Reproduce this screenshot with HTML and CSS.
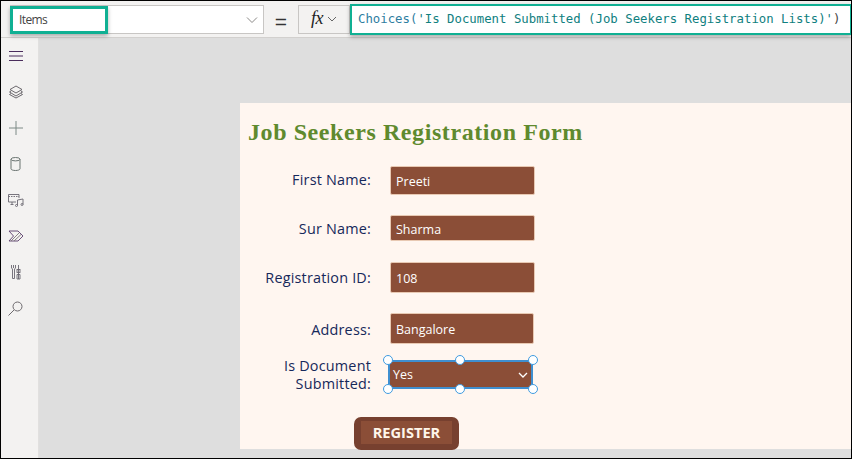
FILE: index.html
```html
<!DOCTYPE html>
<html lang="en">
<head>
<meta charset="utf-8">
<title>Job Seekers Registration Form</title>
<link rel="stylesheet" href="styles.css">
</head>
<body>
<div class="app">
  <header class="formula-bar">
    <div class="property">
      <span class="property-name">Items</span>
      <svg class="chev" width="12" height="8" viewBox="0 0 12 8"><path d="M1 1.500l5 5 5-5" fill="none" stroke="#8a8886"/></svg>
      <div class="highlight-short"></div>
    </div>
    <div class="equals">=</div>
    <div class="fx">
      <span class="fx-label">fx</span>
      <svg width="10" height="6" viewBox="0 0 10 6"><path d="M1 1l4 4 4-4" fill="none" stroke="#666"/></svg>
    </div>
    <div class="formula"><span class="fn">Choices(</span><span class="str">'Is Document Submitted (Job Seekers Registration Lists)'</span><span class="fn-end">)</span></div>
  </header>
  <div class="workspace">
    <nav class="rail">
      <div class="rail-item"><svg width="16" height="12" viewBox="0 0 16 12"><path d="M1 1.500h14M1 6h14M1 10.500h14" fill="none" stroke="#4a2d5c"/></svg></div>
      <div class="rail-item"><svg width="16" height="14" viewBox="0 0 16 14" fill="none" stroke="#5d5a60" stroke-width=".9"><path d="M8 1l6 3.500L8 8 2 4.500z"/><path d="M3 6L1.500 7 8 11l6.500-4L13 6"/><path d="M3 8.500L1.500 9.500 8 13l6.500-3.500L13 8.500"/></svg></div>
      <div class="rail-item"><svg width="16" height="16" viewBox="0 0 16 16"><path d="M8 1v14M1 8h14" fill="none" stroke="#7d8a86"/></svg></div>
      <div class="rail-item"><svg width="11" height="14" viewBox="0 0 11 14" fill="none" stroke="#6a7471"><ellipse cx="5.500" cy="2.200" rx="4.500" ry="1.700"/><path d="M1 2.200v9.600c0 1 2 1.700 4.500 1.700s4.500-.7 4.500-1.700V2.200"/></svg></div>
      <div class="rail-item"><svg width="16" height="13" viewBox="0 0 16 13" fill="none" stroke="#6a6670" stroke-width=".9"><path d="M8 8H.5V.5H11V4"/><path d="M.5 2.500H11" stroke-dasharray="1.500 1"/><path d="M4 8v2M2.500 10.500h3"/><path d="M9.500 11.500V6l5.500-1v5.500"/><circle cx="8.500" cy="11.500" r="1"/><circle cx="14" cy="10.500" r="1"/></svg></div>
      <div class="rail-item"><svg width="16" height="12" viewBox="0 0 16 12" fill="none" stroke="#5a3d6c" stroke-width=".9"><path d="M1 1h9l5 5-5 5H1l4.500-5z"/><path d="M3 11l8-8M6 11l7-6.500" stroke="#7a7478"/></svg></div>
      <div class="rail-item"><svg width="10" height="16" viewBox="0 0 10 16" fill="none" stroke="#6a6670" stroke-width=".9"><path d="M.5 1v3l1 1v9.500h2V5l1-1V1"/><path d="M2.500 1v3"/><path d="M7.500 1v14"/><rect x="6" y="5.500" width="3" height="3"/><path d="M6 10.500h3v4.500H6z"/></svg></div>
      <div class="rail-item"><svg width="15" height="15" viewBox="0 0 15 15" fill="none" stroke="#6d6a6e"><circle cx="9.500" cy="5.500" r="4.500"/><path d="M6 9l-5.500 5.500"/></svg></div>
    </nav>
    <main class="canvas">
      <section class="screen">
        <h1 class="title">Job Seekers Registration Form</h1>
        <div class="row row-first"><label class="label">First Name:</label><div class="input">Preeti</div></div>
        <div class="row row-sur"><label class="label">Sur Name:</label><div class="input">Sharma</div></div>
        <div class="row row-reg"><label class="label">Registration ID:</label><div class="input">108</div></div>
        <div class="row row-addr"><label class="label">Address:</label><div class="input input-narrow">Bangalore</div></div>
        <div class="row row-doc">
          <label class="label">Is Document<br>Submitted:</label>
          <div class="select">
            <span>Yes</span>
            <svg width="10" height="6" viewBox="0 0 10 6"><path d="M1 1l4 4 4-4" fill="none" stroke="#fff" stroke-width="1.300"/></svg>
            <i class="handle h-tl"></i><i class="handle h-tc"></i><i class="handle h-tr"></i>
            <i class="handle h-bl"></i><i class="handle h-bc"></i><i class="handle h-br"></i>
          </div>
        </div>
        <div class="button-row"><button class="register"><span class="register-inner">REGISTER</span></button></div>
      </section>
    </main>
  </div>
</div>
</body>
</html>
```
FILE: styles.css
```css
* { box-sizing: border-box; }
html, body { margin: 0; padding: 0; }
body { width: 852px; height: 459px; overflow: hidden; background: #000; font-family: "Open Sans", sans-serif; }

.app {
  width: 852px;
  height: 459px;
  border: 1px solid #000;
  display: flex;
  flex-direction: column;
  background: #dedede;
}

.formula-bar {
  height: 37px;
  flex: none;
  background: #f3f2f1;
  border-bottom: 1px solid #d2d0ce;
  display: flex;
  align-items: flex-start;
  padding-top: 4px;
  padding-left: 9px;
  position: relative;
  z-index: 2;
}
.property {
  position: relative;
  width: 254px;
  height: 29px;
  background: #fff;
  border: 1px solid #c8c6c4;
  display: flex;
  align-items: center;
  justify-content: space-between;
  padding: 0 5px 0 8px;
}
.property-name { font: 12px "Open Sans", sans-serif; letter-spacing: -0.6px; color: #444; }
.highlight-short {
  position: absolute;
  left: -1px;
  top: 0;
  width: 98px;
  height: 28px;
  border: 3px solid #10b093;
  box-shadow: 0 2px 4px rgba(0,0,0,.3);
}
.equals { width: 34px; text-align: center; font: 21px "Liberation Sans", sans-serif; color: #333; line-height: 33px; }
.fx {
  width: 52px;
  height: 29px;
  border: 1px solid #c8c6c4;
  display: flex;
  align-items: center;
  gap: 4px;
  padding: 0 0 2px 12px;
}
.fx-label { font: italic 18px "Liberation Serif", serif; color: #222; letter-spacing: -0.5px; }
.formula {
  flex: 1;
  height: 31px;
  margin-top: -1px;
  background: #fff;
  border: 2px solid #10b093;
  border-right-width: 1px;
  box-shadow: 0 2px 4px rgba(0,0,0,.3);
  padding: 4px 0 0 6px;
  font: 12.33px/18px "DejaVu Sans Mono", monospace;
  white-space: nowrap;
}
.fn { color: #2e7d9f; }
.str { color: #0f8080; }
.fn-end { color: #444; }

.workspace { flex: 1; display: flex; min-height: 0; }
.rail {
  width: 38px;
  flex: none;
  background: #f3f2f1;
  border-right: 1px solid #e1e0df;
  display: flex;
  flex-direction: column;
}
.rail-item { height: 36px; display: flex; align-items: center; justify-content: center; padding-right: 8px; }

.canvas { flex: 1; min-width: 0; padding: 65px 0 8px 201px; overflow: hidden; }
.screen { height: 346px; background: #fff6f0; padding: 0 0 0 8px; position: relative; }
.title {
  margin: 0;
  height: 56px;
  padding-top: 15px;
  font: bold 24px/29px "Liberation Serif", serif;
  letter-spacing: 0.58px;
  color: #5f8a2e;
}
.row { display: flex; align-items: center; }
.label {
  width: 123px;
  text-align: right;
  font: 500 14.4px/18px "Open Sans", sans-serif;
  color: #16285a;
  letter-spacing: 0.2px;
}
.input {
  width: 145px;
  margin-left: 19px;
  padding-top: 2px;
  background: #8b4e37;
  border: 1px solid #e8c9b3;
  border-radius: 2px;
  color: #fff;
  font: 12.5px "Open Sans", sans-serif;
  padding-left: 5px;
  display: flex;
  align-items: center;
}
.input-narrow { width: 144px; }
.row-first { height: 29px; margin-top: 7px; }
.row-first .label { margin-top: -1px; }
.row-first .input { height: 29px; }
.row-sur { height: 26px; margin-top: 20px; }
.row-sur .label { margin-top: 2px; }
.row-sur .input { height: 26px; }
.row-reg { height: 31px; margin-top: 21px; }
.row-reg .input { height: 31px; }
.row-reg .label { margin-top: 1px; }
.row-addr { height: 31px; margin-top: 20px; }
.row-addr .label { margin-top: 2px; }
.row-addr .input { height: 31px; }
.row-doc { height: 29px; margin-top: 16px; }
.row-doc .label { margin-top: 0; line-height: 18px; }
.select {
  position: relative;
  width: 145px;
  height: 29px;
  margin-left: 17px;
  background: #8b4e37;
  border: 2px solid #3f8fd0;
  color: #fff;
  font: 12.5px "Open Sans", sans-serif;
  display: flex;
  align-items: center;
  justify-content: space-between;
  padding: 0 3px 0 3px;
}
.handle {
  position: absolute;
  width: 10px;
  height: 10px;
  border-radius: 50%;
  background: #fff;
  border: 1.500px solid #3f9be0;
}
.h-tl { left: -7px; top: -7px; }
.h-tc { left: 65px; top: -7px; }
.h-tr { right: -7px; top: -7px; }
.h-bl { left: -7px; bottom: -7px; }
.h-bc { left: 65px; bottom: -7px; }
.h-br { right: -7px; bottom: -7px; }
.button-row { padding-left: 106px; margin-top: 28px; }
.register {
  display: block;
  width: 105px;
  height: 33px;
  padding: 4px 7px 6px;
  border: 0;
  border-radius: 7px;
  background: #77402f;
}
.register-inner {
  display: block;
  height: 23px;
  background: #8b4e37;
  color: #fff6ea;
  font: 700 14.6px/23px "Open Sans", sans-serif;
  text-align: center;
}
```
